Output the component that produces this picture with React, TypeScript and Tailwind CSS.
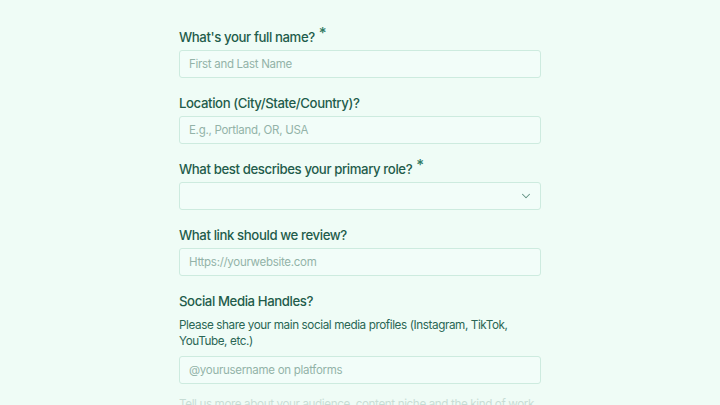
import { ChevronDown } from "lucide-react";

type Field = {
  label: string;
  required?: boolean;
  hint?: string;
  placeholder?: string;
  select?: boolean;
};

const FIELDS: Field[] = [
  { label: "What's your full name?", required: true, placeholder: "First and Last Name" },
  { label: "Location (City/State/Country)?", placeholder: "E.g., Portland, OR, USA" },
  { label: "What best describes your primary role?", required: true, select: true },
  { label: "What link should we review?", placeholder: "Https://yourwebsite.com" },
  {
    label: "Social Media Handles?",
    hint: "Please share your main social media profiles (Instagram, TikTok, YouTube, etc.)",
    placeholder: "@yourusername on platforms",
  },
];

export default function App() {
  return (
    <div
      className="h-[405px] w-[720px] overflow-hidden bg-[#effcf6] tracking-tight"
      style={{ fontFamily: "Inter, 'Noto Sans', sans-serif" }}
    >
      <form className="mx-auto flex w-[362px] flex-col gap-[15px] pt-[27px]">
        {FIELDS.map((f) => (
          <div key={f.label} className="flex flex-col">
            <label className="mb-[3px] flex items-start text-[13.2px] leading-5 font-medium text-[#1f5c4b]">
              {f.label}
              {f.required && (
                <span className="ml-[4px] -mt-[4px] text-[15px] text-[#2f7a63]">*</span>
              )}
            </label>
            {f.hint && (
              <p className="pt-[3px] pb-[7px] text-[11.7px] leading-4 text-[#2a6654]">{f.hint}</p>
            )}
            {f.select ? (
              <div className="flex h-[28px] items-center justify-end rounded-[3px] border border-[#cdebdf] bg-[#f2fdf9] pr-[7px]">
                <ChevronDown className="h-[14px] w-[14px] text-[#5f8f80]" strokeWidth={1.75} />
              </div>
            ) : (
              <input
                placeholder={f.placeholder}
                className="h-[28px] rounded-[3px] border border-[#cdebdf] bg-[#f2fdf9] px-[9px] text-[11.5px] tracking-tight text-[#1f5c4b] outline-none placeholder:text-[#93b3a8]"
              />
            )}
          </div>
        ))}
        <div className="-mt-[3px] flex flex-col">
          <p className="text-[11.7px] leading-4 text-[#2a6654] opacity-20">
            Tell us more about your audience, content niche and the kind of work you do
          </p>
        </div>
      </form>
    </div>
  );
}
